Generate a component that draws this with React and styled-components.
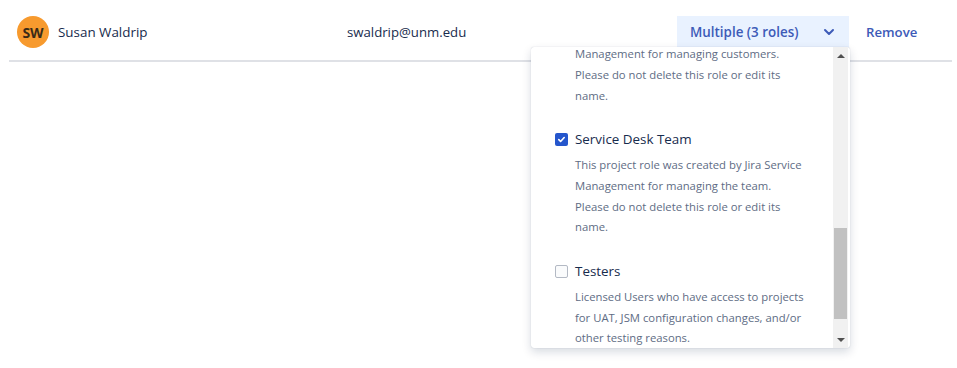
import React, { useLayoutEffect, useRef } from "react";
import styled, { createGlobalStyle } from "styled-components";

const roles = [
    {
        name: "Administrators",
        checked: true,
        text: "A project role that represents administrators in a project.",
    },
    {
        name: "Developers",
        checked: true,
        text: "A project role that represents developers in a project.",
    },
    {
        name: "Service Desk Customers",
        checked: false,
        text: "This project role was created by Jira Service Management for managing customers. Please do not delete this role or edit its name.",
    },
    {
        name: "Service Desk Team",
        checked: true,
        focus: true,
        text: "This project role was created by Jira Service Management for managing the team. Please do not delete this role or edit its name.",
    },
    {
        name: "Testers",
        checked: false,
        text: "Licensed Users who have access to projects for UAT, JSM configuration changes, and/or other testing reasons.",
    },
    {
        name: "Users",
        checked: false,
        text: "A project role that represents users in a project.",
    },
];

function App () {
    const listRef = useRef(null);
    const focusRef = useRef(null);

    useLayoutEffect(() => {
        if (listRef.current && focusRef.current) {
            listRef.current.scrollTop = focusRef.current.offsetTop - 70;
        }
    }, []);

    return (
        <>
            <Global />
            <Page>
                <Row>
                    <Cell>
                        <Avatar>SW</Avatar>
                        <Name>Susan Waldrip</Name>
                    </Cell>
                    <Cell>
                        <Email>swaldrip@unm.edu</Email>
                    </Cell>
                    <Cell>
                        <RoleWrap>
                            <RoleButton>
                                <span>Multiple (3 roles)</span>
                                <svg width="16" height="16" viewBox="0 0 24 24">
                                    <path d="M6 9l6 6 6-6" fill="none" stroke="currentColor" strokeWidth="3" strokeLinecap="round" strokeLinejoin="round"/>
                                </svg>
                            </RoleButton>
                            <Dropdown>
                                <List ref={listRef}>
                                    {roles.map((r) => (
                                        <Item key={r.name} ref={r.focus ? focusRef : null}>
                                            <ItemHead>
                                                <Check checked={r.checked}>
                                                    {r.checked && (
                                                        <svg width="9" height="9" viewBox="0 0 10 10">
                                                            <path d="M2 5.2l2 2 4-4.4" fill="none" stroke="#fff" strokeWidth="1.8" strokeLinecap="round" strokeLinejoin="round"/>
                                                        </svg>
                                                    )}
                                                </Check>
                                                <ItemTitle>{r.name}</ItemTitle>
                                            </ItemHead>
                                            <ItemText>{r.text}</ItemText>
                                        </Item>
                                    ))}
                                </List>
                                <Scrollbar>
                                    <Arrow><ArrowUp /></Arrow>
                                    <Track>
                                        <Thumb />
                                    </Track>
                                    <Arrow><ArrowDown /></Arrow>
                                </Scrollbar>
                            </Dropdown>
                        </RoleWrap>
                    </Cell>
                    <Cell>
                        <Remove href="#">Remove</Remove>
                    </Cell>
                </Row>
            </Page>
        </>
    );
};

const Global = createGlobalStyle`
    html, body, #root {
        height: 100%;
    }
    body {
        margin: 0;
        background: #fff;
        font-family: "Open Sans", "Noto Sans", sans-serif;
        color: #172B4D;
    }
`

const Page = styled.div`
    min-height: 100%;
    padding: 0 5px 0 9px;
`

const Row = styled.div`
    display: grid;
    grid-template-columns: 330px 330px 189px 1fr;
    align-items: center;
    padding: 16px 0 12px;
    border-bottom: 2px solid #DFE1E6;
`

const Cell = styled.div`
    display: flex;
    align-items: center;
    padding: 0 8px;
    height: 32px;
`

const Avatar = styled.div`
    width: 32px;
    height: 32px;
    border-radius: 50%;
    background: #F79A2E;
    color: #3A2A17;
    font-size: 14px;
    font-weight: 700;
    display: flex;
    align-items: center;
    justify-content: center;
    flex-shrink: 0;
`

const Name = styled.span`
    margin-left: 9px;
    font-size: 13.4px;
`

const Email = styled.span`
    font-size: 13.2px;
`

const RoleWrap = styled.div`
    position: relative;
`

const RoleButton = styled.div`
    width: 172px;
    height: 32px;
    box-sizing: border-box;
    padding: 0 12px 0 13px;
    display: flex;
    align-items: center;
    justify-content: space-between;
    background: #E9F2FF;
    color: #3D5BB8;
    font-size: 13.4px;
    font-weight: 600;
`

const Remove = styled.a`
    color: #3D5BB8;
    font-size: 13.2px;
    font-weight: 600;
    text-decoration: none;
`

const Dropdown = styled.div`
    position: absolute;
    top: 31px;
    right: -1px;
    width: 319px;
    height: 301px;
    display: flex;
    background: #fff;
    border-radius: 3px;
    box-shadow: 0 4px 10px rgba(9, 30, 66, 0.16), 0 0 1px rgba(9, 30, 66, 0.25);
    overflow: hidden;
    z-index: 10;
`

const List = styled.div`
    flex: 1;
    overflow: hidden;
    padding: 0 0 0 24px;
`

const Item = styled.div`
    padding: 12px 0 11px;
`

const ItemHead = styled.div`
    display: flex;
    align-items: center;
    height: 20px;
`

const Check = styled.span`
    width: 13px;
    height: 13px;
    box-sizing: border-box;
    border-radius: 2px;
    display: flex;
    align-items: center;
    justify-content: center;
    background: ${({checked}) => checked ? '#2556CC' : '#FAFBFC'};
    border: ${({checked}) => checked ? 'none' : '1.5px solid #B3B9C4'};
`

const ItemTitle = styled.span`
    margin-left: 7px;
    font-size: 13.4px;
    font-weight: 500;
    color: #172B4D;
`

const ItemText = styled.p`
    margin: 6px 0 0 20px;
    width: 230px;
    font-size: 11.3px;
    line-height: 20.67px;
    color: #5E6C84;
`

const Scrollbar = styled.div`
    width: 15px;
    display: flex;
    flex-direction: column;
    background: #F1F1F1;
    margin-right: 2px;
`

const Arrow = styled.div`
    height: 17px;
    display: flex;
    align-items: center;
    justify-content: center;
`

const ArrowUp = styled.span`
    width: 0;
    height: 0;
    border-left: 4px solid transparent;
    border-right: 4px solid transparent;
    border-bottom: 4px solid #505050;
`

const ArrowDown = styled.span`
    width: 0;
    height: 0;
    border-left: 4px solid transparent;
    border-right: 4px solid transparent;
    border-top: 4px solid #505050;
`

const Track = styled.div`
    flex: 1;
    padding: 164px 1px 0;
`

const Thumb = styled.div`
    height: 91px;
    background: #C1C1C1;
`

export default App;
